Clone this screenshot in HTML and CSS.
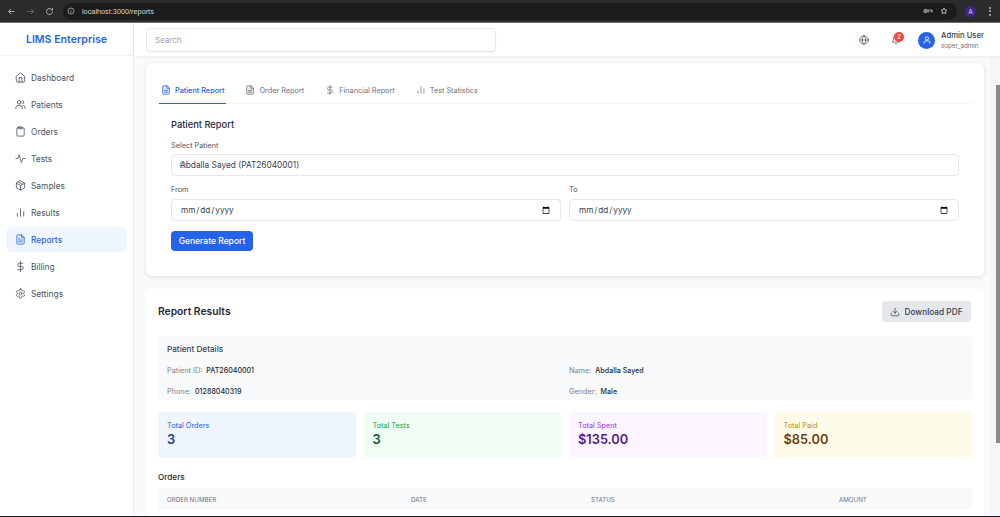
FILE: index.html
```html
<!DOCTYPE html>
<html lang="en">
<head>
<meta charset="utf-8">
<title>LIMS Enterprise</title>
<link rel="stylesheet" href="styles.css">
</head>
<body>
<div class="window">
  <div class="chrome">
    <svg class="chrome-ico first" viewBox="0 0 24 24"><path d="M20 12H5M11 5l-7 7 7 7"/></svg>
    <svg class="chrome-ico dim" viewBox="0 0 24 24"><path d="M4 12h15M13 5l7 7-7 7"/></svg>
    <svg class="chrome-ico" viewBox="0 0 24 24"><path d="M20 12a8 8 0 1 1-2.5-5.8M20 3v5h-5"/></svg>
    <div class="omnibox">
      <svg class="omni-info" viewBox="0 0 24 24"><circle cx="12" cy="12" r="9"/><path d="M12 11v6M12 7v1"/></svg>
      <span class="url">localhost:3000/reports</span>
      <span class="omni-spacer"></span>
      <svg class="omni-key" viewBox="0 0 24 14"><circle cx="6" cy="7" r="4"/><circle cx="6" cy="7" r="1"/><path d="M10 5h12v4h-3M15 9h-4"/></svg>
      <svg class="omni-star" viewBox="0 0 24 24"><path d="M12 3l2.7 5.9 6.3.7-4.7 4.3 1.3 6.3L12 17l-5.6 3.2 1.3-6.3L3 9.6l6.3-.7z"/></svg>
    </div>
    <span class="profile">A</span>
    <span class="kebab"><i></i><i></i><i></i></span>
  </div>
  <div class="app">
    <aside class="sidebar">
      <div class="brand">LIMS Enterprise</div>
      <nav class="nav">
        <a class="nav-item"><svg class="ico" viewBox="0 0 24 24"><path d="M3 9l9-7 9 7v11a2 2 0 0 1-2 2H5a2 2 0 0 1-2-2z"/><path d="M9 22V12h6v10"/></svg>Dashboard</a>
        <a class="nav-item"><svg class="ico" viewBox="0 0 24 24"><circle cx="9" cy="7" r="4"/><path d="M2 21v-2a5 5 0 0 1 5-5h4a5 5 0 0 1 5 5v2M16 3.100a4 4 0 0 1 0 7.800M22 21v-2a5 5 0 0 0-4-4.900"/></svg>Patients</a>
        <a class="nav-item"><svg class="ico" viewBox="0 0 24 24"><rect x="4" y="4" width="16" height="18" rx="2"/><rect x="8" y="2" width="8" height="4" rx="1"/></svg>Orders</a>
        <a class="nav-item"><svg class="ico" viewBox="0 0 24 24"><path d="M2 12h4l3-8 5 17 3-9h5"/></svg>Tests</a>
        <a class="nav-item"><svg class="ico" viewBox="0 0 24 24"><path d="M12 2l9 5v10l-9 5-9-5V7z"/><path d="M3 7l9 5 9-5M12 12v10M7.500 4.500l9 5"/></svg>Samples</a>
        <a class="nav-item"><svg class="ico" viewBox="0 0 24 24"><path d="M5 20v-6M12 20V4M19 20v-10"/></svg>Results</a>
        <a class="nav-item active"><svg class="ico" viewBox="0 0 24 24"><path d="M14 2H6a2 2 0 0 0-2 2v16a2 2 0 0 0 2 2h12a2 2 0 0 0 2-2V8z"/><path d="M14 2v6h6M8 13h8M8 17h8M8 9h2"/></svg>Reports</a>
        <a class="nav-item"><svg class="ico" viewBox="0 0 24 24"><path d="M12 1v22M17 5H9.500a3.500 3.500 0 0 0 0 7h5a3.500 3.500 0 0 1 0 7H6"/></svg>Billing</a>
        <a class="nav-item"><svg class="ico" viewBox="0 0 24 24"><circle cx="12" cy="12" r="3"/><path d="M12.220 2h-.44a2 2 0 0 0-2 2v.18a2 2 0 0 1-1 1.730l-.43.25a2 2 0 0 1-2 0l-.15-.08a2 2 0 0 0-2.730.73l-.22.38a2 2 0 0 0 .73 2.730l.15.1a2 2 0 0 1 1 1.720v.51a2 2 0 0 1-1 1.740l-.15.09a2 2 0 0 0-.73 2.730l.22.38a2 2 0 0 0 2.730.73l.15-.08a2 2 0 0 1 2 0l.43.25a2 2 0 0 1 1 1.730V20a2 2 0 0 0 2 2h.44a2 2 0 0 0 2-2v-.18a2 2 0 0 1 1-1.730l.43-.25a2 2 0 0 1 2 0l.15.08a2 2 0 0 0 2.730-.73l.22-.39a2 2 0 0 0-.73-2.730l-.15-.08a2 2 0 0 1-1-1.740v-.5a2 2 0 0 1 1-1.740l.15-.09a2 2 0 0 0 .73-2.730l-.22-.38a2 2 0 0 0-2.730-.73l-.15.08a2 2 0 0 1-2 0l-.43-.25a2 2 0 0 1-1-1.730V4a2 2 0 0 0-2-2z"/></svg>Settings</a>
      </nav>
    </aside>
    <div class="page">
      <header class="topbar">
        <div class="search">Search</div>
        <div class="top-actions">
          <svg class="top-ico" viewBox="0 0 24 24"><circle cx="12" cy="12" r="10"/><path d="M2 12h20M12 2c3 3 4 6.500 4 10s-1 7-4 10c-3-3-4-6.500-4-10s1-7 4-10z"/></svg>
          <div class="bell">
            <svg class="top-ico" viewBox="0 0 24 24"><path d="M18 8a6 6 0 0 0-12 0c0 7-3 9-3 9h18s-3-2-3-9M13.700 21a2 2 0 0 1-3.400 0"/></svg>
            <span class="badge">2</span>
          </div>
          <div class="user">
            <span class="avatar"><svg viewBox="0 0 24 24"><circle cx="12" cy="8" r="4"/><path d="M5 21v-2a5 5 0 0 1 5-5h4a5 5 0 0 1 5 5v2"/></svg></span>
            <div class="user-text"><div class="user-name">Admin User</div><div class="user-role">super_admin</div></div>
          </div>
        </div>
      </header>
      <div class="content-row">
        <main class="content">
          <section class="card form-card">
            <div class="tabs">
              <a class="tab active"><svg class="tab-ico doc" viewBox="0 0 24 24"><path d="M14 2H6a2 2 0 0 0-2 2v16a2 2 0 0 0 2 2h12a2 2 0 0 0 2-2V8z"/><path d="M14 2v6h6M8 13h8M8 17h8"/></svg>Patient Report</a>
              <a class="tab"><svg class="tab-ico doc" viewBox="0 0 24 24"><path d="M14 2H6a2 2 0 0 0-2 2v16a2 2 0 0 0 2 2h12a2 2 0 0 0 2-2V8z"/><path d="M14 2v6h6M8 13h8M8 17h8"/></svg>Order Report</a>
              <a class="tab"><svg class="tab-ico" viewBox="0 0 24 24"><path d="M12 1v22M17 5H9.500a3.500 3.500 0 0 0 0 7h5a3.500 3.500 0 0 1 0 7H6"/></svg>Financial Report</a>
              <a class="tab"><svg class="tab-ico" viewBox="0 0 24 24"><path d="M5 20v-6M12 20V4M19 20v-10"/></svg>Test Statistics</a>
            </div>
            <div class="form">
              <h2 class="form-title">Patient Report</h2>
              <label class="label">Select Patient</label>
              <div class="select-box">
                <svg class="select-search" viewBox="0 0 24 24"><circle cx="11" cy="11" r="8"/><path d="M21 21l-4.300-4.300"/></svg>
                <span>Abdalla Sayed (PAT26040001)</span>
              </div>
              <div class="dates">
                <div class="date-field"><label class="label date-label">From</label><input class="date" type="date"></div>
                <div class="date-field"><label class="label date-label">To</label><input class="date" type="date"></div>
              </div>
              <button class="generate">Generate Report</button>
            </div>
          </section>
          <section class="card results">
            <div class="results-head">
              <h2 class="results-title">Report Results</h2>
              <button class="download"><svg class="dl-ico" viewBox="0 0 24 24"><path d="M21 15v4a2 2 0 0 1-2 2H5a2 2 0 0 1-2-2v-4M7 10l5 5 5-5M12 15V3"/></svg>Download PDF</button>
            </div>
            <div class="details">
              <h3 class="details-title">Patient Details</h3>
              <div class="details-grid">
                <div><span class="k">Patient ID:</span><span class="v">PAT26040001</span></div>
                <div><span class="k">Name:</span><span class="v">Abdalla Sayed</span></div>
                <div><span class="k">Phone:</span><span class="v">01288040319</span></div>
                <div><span class="k">Gender:</span><span class="v">Male</span></div>
              </div>
            </div>
            <div class="stats">
              <div class="stat blue"><div class="stat-label">Total Orders</div><div class="stat-value">3</div></div>
              <div class="stat green"><div class="stat-label">Total Tests</div><div class="stat-value">3</div></div>
              <div class="stat purple"><div class="stat-label">Total Spent</div><div class="stat-value">$135.00</div></div>
              <div class="stat yellow"><div class="stat-label">Total Paid</div><div class="stat-value">$85.00</div></div>
            </div>
            <h3 class="orders-title">Orders</h3>
            <div class="table-head">
              <span>ORDER NUMBER</span>
              <span>DATE</span>
              <span>STATUS</span>
              <span>AMOUNT</span>
            </div>
          </section>
        </main>
        <div class="scrollbar"><div class="thumb"></div></div>
      </div>
    </div>
  </div>
  <div class="bottom-line"></div>
</div>
</body>
</html>
```
FILE: styles.css
```css
* { box-sizing: border-box; }
html, body { margin: 0; height: 100%; overflow: hidden; }
body { font-family: Inter, "Liberation Sans", sans-serif; color: #1f2937; background: #fff; }
.window { width: 1000px; height: 517px; display: flex; flex-direction: column; overflow: hidden; }

.chrome { height: 23px; flex: none; background: #2b2b2b; border-bottom: 1px solid #6f6f6f; display: flex; align-items: center; padding: 0 0 0 7px; }
.chrome-ico { width: 9px; height: 9px; fill: none; stroke: #c7c7c7; stroke-width: 2.2; margin-right: 10px; flex: none; }
.chrome-ico.dim { stroke: #6d6d6d; }
.omnibox { width: 894px; height: 17px; margin-left: -1px; background: #1c1c1c; border-radius: 9px; display: flex; align-items: center; padding: 0 9px 0 4px; }
.omni-info { width: 8px; height: 8px; fill: none; stroke: #d0d0d0; stroke-width: 2; flex: none; }
.url { font-size: 7.300px; color: #d6d6d6; margin-left: 7px; font-family: "Liberation Sans", sans-serif; }
.omni-spacer { flex: 1; }
.omni-key { width: 10px; height: 6px; fill: none; stroke: #cfcfcf; stroke-width: 2; margin-right: 7px; }
.omni-star { width: 8px; height: 8px; fill: none; stroke: #d8d8d8; stroke-width: 2.2; }
.profile { width: 11px; height: 11px; margin-left: 8px; border-radius: 50%; background: #3d2a8c; color: #e6e0ff; font-size: 6px; line-height: 11px; text-align: center; flex: none; }
.kebab { margin-left: 13px; display: flex; flex-direction: column; gap: 1.500px; }
.kebab i { display: block; width: 2px; height: 2px; border-radius: 50%; background: #bdbdbd; }

.app { flex: 1; display: flex; min-height: 0; }
.sidebar { width: 134px; flex: none; background: #fff; border-right: 1px solid #e9ebef; }
.brand { height: 33px; padding-top: 1px; display: flex; align-items: center; justify-content: center; color: #2563eb; font-size: 10.600px; font-weight: 600; border-bottom: 1px solid #f0f1f4; }
.nav { padding: 9px 6px 0; display: flex; flex-direction: column; gap: 2px; }
.nav-item { height: 25px; display: flex; align-items: center; padding-left: 9px; font-size: 8.400px; color: #4b5563; border-radius: 6px; }
.nav-item.active { background: #eff6ff; color: #2563eb; font-weight: 500; width: 121px; }
.ico { width: 11px; height: 11px; fill: none; stroke: currentColor; stroke-width: 1.800; stroke-linecap: round; stroke-linejoin: round; margin-right: 5px; flex: none; }

.page { flex: 1; min-width: 0; display: flex; flex-direction: column; background: #f9fafb; }
.topbar { height: 33px; flex: none; background: #fff; box-shadow: 0 1px 3px rgba(0,0,0,.06); display: flex; align-items: center; padding: 1px 16px 0 12px; position: relative; }
.search { width: 350px; height: 24px; border: 1px solid #e5e7eb; border-radius: 4px; padding-left: 8px; line-height: 22px; font-size: 8px; color: #9ca3af; box-shadow: 0 1px 2px rgba(0,0,0,.04); }
.top-actions { margin-left: auto; display: flex; align-items: center; }
.top-ico { display: block; width: 10px; height: 10px; fill: none; stroke: #4b5563; stroke-width: 1.800; stroke-linecap: round; stroke-linejoin: round; }
.bell { position: relative; margin-left: 22px; }
.badge { position: absolute; top: -3px; left: 3px; width: 10px; height: 10px; border-radius: 50%; background: #ef4444; color: #fff; font-size: 6.500px; line-height: 10px; text-align: center; font-weight: 500; }
.user { display: flex; align-items: center; margin-left: 17px; }
.avatar { width: 17px; height: 17px; border-radius: 50%; background: #2563eb; display: flex; align-items: center; justify-content: center; }
.avatar svg { width: 10px; height: 10px; fill: none; stroke: #fff; stroke-width: 2; }
.user-text { margin-left: 6px; }
.user-name { font-size: 7.700px; font-weight: 500; color: #374151; line-height: 10px; }
.user-role { font-size: 6.200px; color: #6b7280; line-height: 9px; }

.content-row { flex: 1; min-height: 0; display: flex; }
.content { flex: 1; min-width: 0; padding: 7px 6px 0 12px; overflow: hidden; }
.card { background: #fff; border-radius: 6px; }
.form-card { height: 213px; padding: 14px 12px 0 13px; box-shadow: 0 1px 4px rgba(0,0,0,.12); }
.tabs { display: flex; border-bottom: 1px solid #f3f4f6; height: 27px; }
.tab { height: 27px; display: flex; align-items: center; padding: 0 2px; margin-right: 17px; font-size: 7.300px; color: #6b7280; border-bottom: 1px solid transparent; }
.tab.active { color: #2563eb; border-bottom-color: #2563eb; font-weight: 500; }
.tab-ico { width: 10px; height: 10px; fill: none; stroke: currentColor; stroke-width: 1.800; stroke-linecap: round; stroke-linejoin: round; margin-right: 4px; flex: none; }
.tab-ico.doc { fill: currentColor; fill-opacity: .14; }
.form { padding: 14px 13px 0 12px; }
.form-title { margin: 0 0 10px; font-size: 9.300px; line-height: 13px; font-weight: 500; color: #1f2937; }
.label { display: block; font-size: 7.300px; line-height: 9px; color: #4b5563; margin-bottom: 4px; }
.date-label { margin-bottom: 5px; }
.select-box { height: 22px; position: relative; border: 1px solid #e5e7eb; border-radius: 4px; display: flex; align-items: center; padding-left: 8px; font-size: 8.300px; color: #374151; margin-bottom: 9px; }
.select-search { position: absolute; left: 7px; top: 6px; width: 8px; height: 8px; fill: none; stroke: #6b7280; stroke-width: 2; }
.dates { display: flex; gap: 8px; }
.date-field { flex: 1; min-width: 0; }
.date { display: block; width: 100%; height: 22px; border: 1px solid #e5e7eb; border-radius: 4px; padding: 0 8px; font: 8.200px Inter, "Liberation Sans", sans-serif; color: #374151; background: #fff; }
.generate { display: block; margin-top: 10px; width: 82px; height: 20px; padding: 0; border: 0; border-radius: 4px; background: #2563eb; color: #fff; font: 500 8.500px Inter, "Liberation Sans", sans-serif; }

.results { margin-top: 13px; padding: 12px 12px 0; height: 230px; }
.results-head { display: flex; justify-content: space-between; align-items: center; height: 21px; margin: 0 1px 14px 0; }
.results-title { margin: 0 0 1px; font-size: 10.300px; font-weight: 600; color: #1f2937; }
.download { width: 89px; height: 21px; padding: 0; border: 0; border-radius: 4px; background: #e5e7eb; color: #374151; font: 500 8.300px Inter, "Liberation Sans", sans-serif; display: flex; align-items: center; justify-content: center; }
.dl-ico { width: 10px; height: 10px; fill: none; stroke: #374151; stroke-width: 1.800; stroke-linecap: round; stroke-linejoin: round; margin-right: 4px; }
.details { height: 64px; background: #f9fafb; border-radius: 4px; padding: 8px 9px 0; }
.details-title { margin: 0 0 8px; font-size: 8.200px; line-height: 11px; font-weight: 500; color: #374151; }
.details-grid { display: grid; grid-template-columns: 402px 1fr; row-gap: 9px; line-height: 9px; }
.k { color: #7b8290; margin-right: 4px; font-size: 7.300px; }
.v { color: #1f2937; font-weight: 500; font-size: 7.100px; }
.stats { margin-top: 12px; display: grid; grid-template-columns: repeat(4, 1fr); gap: 8px; }
.stat { height: 46px; border-radius: 4px; padding: 9px 9px 0; }
.stat-label { font-size: 7.300px; line-height: 10px; }
.stat-value { font-size: 12.800px; line-height: 16px; margin-top: 1px; font-weight: 600; }
.blue { background: #eff6ff; } .blue .stat-label { color: #2563eb; } .blue .stat-value { color: #1e3a8a; }
.green { background: #f0fdf4; } .green .stat-label { color: #16a34a; } .green .stat-value { color: #14532d; }
.purple { background: #faf5ff; } .purple .stat-label { color: #9333ea; } .purple .stat-value { color: #581c87; }
.yellow { background: #fefce8; } .yellow .stat-label { color: #ca8a04; } .yellow .stat-value { color: #713f12; }
.orders-title { margin: 14px 0 5px; font-size: 8.200px; line-height: 11px; font-weight: 500; color: #1f2937; }
.table-head { height: 21px; padding: 3px 0 0 9px; background: #f9fafb; border-bottom: 1px solid #f3f4f6; display: grid; grid-template-columns: 244px 180px 248px 1fr; align-items: center; font-size: 6.200px; color: #6b7280; }

.scrollbar { width: 10px; flex: none; background: #f6f6f6; display: flex; justify-content: flex-end; padding-top: 29px; }
.thumb { width: 4px; height: 358px; background: #8a8a8a; }
.bottom-line { height: 1px; flex: none; background: #1a1a22; }
```
